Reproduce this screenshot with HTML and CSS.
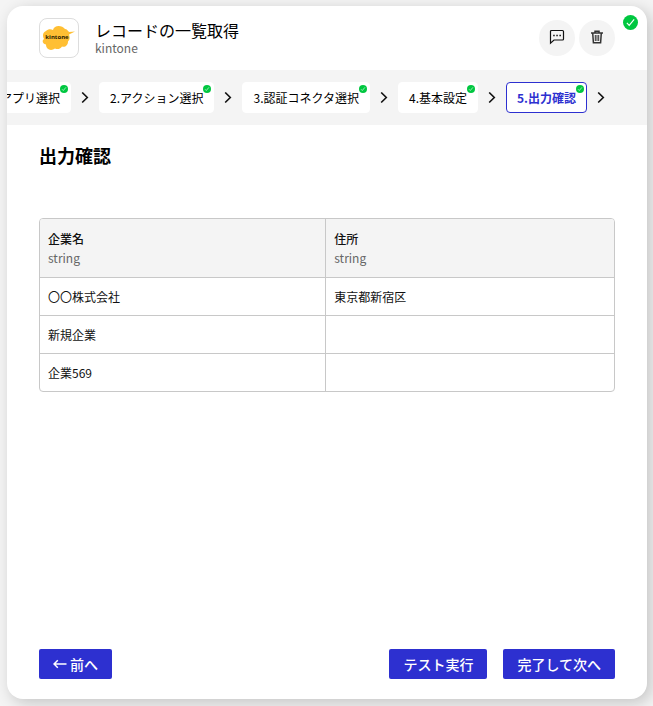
FILE: index.html
```html
<!DOCTYPE html>
<html lang="ja">
<head>
	<meta charset="UTF-8">
	<meta name="viewport" content="width=device-width, initial-scale=1">
	<title>レコードの一覧取得</title>
	<link rel="stylesheet" href="styles.css">
</head>
<body>

<!-- shared icons -->
<svg class="defs" aria-hidden="true">
	<symbol id="check" viewBox="0 0 16 16">
		<circle cx="8" cy="8" r="8" fill="#00c740"/>
		<path d="M4.1 8.500l2.500 2.500 5.300-6.300" fill="none" stroke="#fff" stroke-width="1.200"/>
	</symbol>
	<symbol id="chevron" viewBox="0 0 8 12">
		<path d="M1.200 .5L6.300 5.500l-5.100 5" fill="none" stroke="#111" stroke-width="1.600"/>
	</symbol>
</svg>

<main class="panel">
	<header class="header">
		<div class="app-icon">
			<svg width="34" height="26" viewBox="0 0 34 26" aria-hidden="true">
				<path d="M4 6c2-2 5-2 7-1 1-5 9-5 12-1 2 0 3 2 4 3l6-.5-6 3c1 3 1 5-1 7 0 4-3 6-6 5-2 3-5 3-7 2-4 3-9 1-9-4C0 19 0 15 2 14 0 11 1 7 4 6z" fill="#ffbf33"/>
				<text x="15" y="14" text-anchor="middle" class="logo-text">kintone</text>
			</svg>
		</div>
		<div class="title">
			<h1>レコードの一覧取得</h1>
			<p>kintone</p>
		</div>
		<div class="actions">
			<button type="button" class="round" aria-label="コメント">
				<svg width="16" height="16" viewBox="0 0 16 16" fill="none" stroke="#111">
					<path d="M1.500 14.200V2.500q0-1 1-1h11q1 0 1 1v7.500q0 1-1 1H5z" stroke-width="1.200"/>
					<path d="M4.200 6.500h1.500M7.300 6.500h1.500M10.400 6.500h1.500" stroke-width="1.500"/>
				</svg>
			</button>
			<button type="button" class="round" aria-label="削除">
				<svg width="14" height="14" viewBox="0 0 14 14" fill="none" stroke="#333">
					<path d="M1 3h12M5 3V1.300h4V3M2.700 3l.7 9.700h7.200l.7-9.700" stroke-width="1.500"/>
					<path d="M5.300 5v6M7 5v6M8.700 5v6" stroke-width="1"/>
				</svg>
			</button>
		</div>
		<svg class="status"><use href="#check"/></svg>
	</header>

	<nav class="steps">
		<a href="#" class="step">1.アプリ選択<svg class="badge"><use href="#check"/></svg></a>
		<svg class="chevron"><use href="#chevron"/></svg>
		<a href="#" class="step">2.アクション選択<svg class="badge"><use href="#check"/></svg></a>
		<svg class="chevron"><use href="#chevron"/></svg>
		<a href="#" class="step">3.認証コネクタ選択<svg class="badge"><use href="#check"/></svg></a>
		<svg class="chevron"><use href="#chevron"/></svg>
		<a href="#" class="step">4.基本設定<svg class="badge"><use href="#check"/></svg></a>
		<svg class="chevron"><use href="#chevron"/></svg>
		<a href="#" class="step current" aria-current="step">5.出力確認<svg class="badge"><use href="#check"/></svg></a>
		<svg class="chevron"><use href="#chevron"/></svg>
	</nav>

	<section class="content">
		<h2>出力確認</h2>
		<table class="output">
			<thead>
				<tr>
					<th scope="col">企業名<span class="type">string</span></th>
					<th scope="col">住所<span class="type">string</span></th>
				</tr>
			</thead>
			<tbody>
				<tr><td>〇〇株式会社</td><td>東京都新宿区</td></tr>
				<tr><td>新規企業</td><td></td></tr>
				<tr><td>企業569</td><td></td></tr>
			</tbody>
		</table>
	</section>

	<footer class="footer">
		<button type="button" class="btn back">
			<svg width="14" height="10" viewBox="0 0 14 10" fill="none" stroke="#fff" stroke-width="1.500" aria-hidden="true">
				<path d="M13.500 5H1.200M4.800 1.200L1 5l3.800 3.800"/>
			</svg>
			前へ
		</button>
		<button type="button" class="btn">テスト実行</button>
		<button type="button" class="btn">完了して次へ</button>
	</footer>
</main>

</body>
</html>
```

FILE: styles.css
```css
* {
	box-sizing: border-box;
}

body {
	margin: 0;
	padding: 6px 6px 7px 7px;
	background: #f4f4f4;
	color: #000;
	font-family: "Noto Sans CJK JP", sans-serif;
	font-size: 12px;
	line-height: 18px;
}

h1, h2, p {
	margin: 0;
}

button {
	border: 0;
	font-family: inherit;
	cursor: pointer;
}

.defs {
	display: none;
}

.panel {
	display: flex;
	flex-direction: column;
	min-height: calc(100vh - 13px);
	background: #fff;
	border-radius: 16px;
	box-shadow: 4px 4px 16px rgba(0, 0, 0, 0.2);
}

/* header */
.header {
	position: relative;
	display: flex;
	align-items: center;
	height: 64px;
	padding: 0 32px;
}

.app-icon {
	display: flex;
	align-items: center;
	justify-content: center;
	width: 40px;
	height: 40px;
	border: 1px solid #ddd;
	border-radius: 8px;
}

.logo-text {
	font-family: "Open Sans", sans-serif;
	font-size: 6px;
	font-weight: bold;
	fill: #2b1c00;
}

.title {
	flex: 1;
	margin-left: 16px;
}

.title h1 {
	font-size: 16px;
	font-weight: 400;
	line-height: 20px;
}

.title p {
	color: #666;
	line-height: 16px;
}

.actions {
	display: flex;
	gap: 4px;
}

.round {
	display: flex;
	align-items: center;
	justify-content: center;
	width: 36px;
	height: 36px;
	padding: 0 0 3px;
	background: #f4f4f4;
	border-radius: 50%;
}

.status {
	position: absolute;
	top: 9px;
	right: 9px;
	width: 15px;
	height: 15px;
}

/* steps */
.steps {
	display: flex;
	align-items: center;
	justify-content: flex-end;
	gap: 10px;
	height: 55px;
	padding-right: 42px;
	background: #f4f4f4;
	overflow: hidden;
}

.step {
	position: relative;
	flex: none;
	padding: 6px 10px;
	border: 1px solid #fff;
	border-radius: 4px;
	background: #fff;
	color: #000;
	line-height: 17px;
	text-decoration: none;
	white-space: nowrap;
}

.step.current {
	border-color: #2d30d0;
	color: #2d30d0;
	font-weight: bold;
}

.badge {
	position: absolute;
	top: 2px;
	right: 2px;
	width: 8px;
	height: 8px;
}

.chevron {
	flex: none;
	width: 8px;
	height: 12px;
}

/* content */
.content {
	flex: 1;
	padding: 16px 32px;
}

.content h2 {
	margin-bottom: 49px;
	font-size: 18px;
	line-height: 28px;
}

.output {
	width: 100%;
	table-layout: fixed;
	border: 1px solid #c8c8c8;
	border-radius: 4px;
	border-spacing: 0;
	overflow: hidden;
	color: #111;
}

.output th,
.output td {
	padding: 10px 8px;
	text-align: left;
	line-height: 19px;
}

.output th {
	background: #f4f4f4;
	font-weight: 500;
}

.output th:first-child {
	width: 49.7%;
}

.output td {
	padding: 9px 8px;
	border-top: 1px solid #c8c8c8;
}

.output th + th,
.output td + td {
	border-left: 1px solid #c8c8c8;
}

.type {
	display: block;
	color: #666;
	font-weight: 400;
}

/* footer */
.footer {
	display: flex;
	gap: 16px;
	padding: 0 32px 20px;
}

.btn {
	display: flex;
	align-items: center;
	gap: 3px;
	height: 30px;
	padding: 0 14px;
	background: #2d30d0;
	border-radius: 2px;
	color: #fff;
	font-size: 14px;
	font-weight: 500;
}

.back {
	margin-right: auto;
}
```
